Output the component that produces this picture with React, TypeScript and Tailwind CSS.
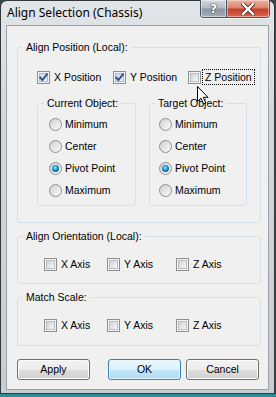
import React from "react";

const F = { fontFamily: '"Liberation Sans", Arial, sans-serif' };

function Check({ checked = false }: { checked?: boolean }) {
  return (
    <span className="relative flex h-[13px] w-[13px] shrink-0 border border-[#8e8f8f] bg-[#f4f4f4] p-[1px]">
      <span
        className={
          "flex-1 border " +
          (checked
            ? "border-[#a9b9cf] bg-[linear-gradient(135deg,#c9d5e6,#f2f6fb)]"
            : "border-[#b9bcc0] bg-[linear-gradient(135deg,#cfd2d6,#f7f7f7)]")
        }
      />
      {checked && (
        <svg className="absolute left-0 top-0" width="11" height="11" viewBox="0 0 11 11">
          <path d="M2.2 5.6 L4.4 8 L8.9 2.3" fill="none" stroke="#2e4f8f" strokeWidth="1.9" strokeLinecap="square" />
        </svg>
      )}
    </span>
  );
}

function Radio({ sel = false }: { sel?: boolean }) {
  return (
    <span className="flex h-[13px] w-[13px] shrink-0 items-center justify-center rounded-full border border-[#8e8f8f] bg-[linear-gradient(135deg,#cdd0d4,#fbfbfb)]">
      {sel && (
        <span className="h-[7px] w-[7px] rounded-full bg-[radial-gradient(circle_at_45%_40%,#b6ecff_0%,#2aa2e0_35%,#0d5a9a_70%,#0a3560_100%)]" />
      )}
    </span>
  );
}

function Group({
  label,
  className,
  children,
  labelLeft = "left-[5px]",
}: {
  label: string;
  className: string;
  children?: React.ReactNode;
  labelLeft?: string;
}) {
  return (
    <div className={"relative rounded-[3px] border border-[#d5dfe5] " + className}>
      <span className={"absolute top-[-8px] bg-[#f0f0f0] px-[3px] text-[10.5px] leading-[14px] text-black " + labelLeft}>
        {label}
      </span>
      {children}
    </div>
  );
}

function CheckItem({ label, checked, w, focus }: { label: string; checked?: boolean; w: string; focus?: boolean }) {
  return (
    <div className={"flex h-[16px] items-center " + w}>
      <Check checked={checked} />
      <span
        className={
          "ml-[1px] px-[2px] text-[10.5px] leading-[14px] text-black " +
          (focus ? "border border-dotted border-black" : "border border-transparent")
        }
      >
        {label}
      </span>
    </div>
  );
}

function RadioItem({ label, sel }: { label: string; sel?: boolean }) {
  return (
    <div className="flex h-[22px] items-center">
      <Radio sel={sel} />
      <span className="ml-[3px] text-[10.5px] leading-[14px] text-black">{label}</span>
    </div>
  );
}

function Btn({ label, def, className = "" }: { label: string; def?: boolean; className?: string }) {
  return (
    <div
      className={
        "flex h-[21px] w-[73px] items-center justify-center rounded-[3px] border text-[10.5px] text-black " +
        (def
          ? "border-[#3c7fb1] bg-[linear-gradient(#edf7fd_0%,#dcf1fc_50%,#c3e7fb_50%,#aedcf6_100%)] shadow-[inset_0_0_0_1px_#e6f5fd] "
          : "border-[#707070] bg-[linear-gradient(#f3f3f3_0%,#ececec_50%,#dedede_50%,#d0d0d0_100%)] shadow-[inset_0_0_0_1px_#fbfbfb] ") +
        className
      }
    >
      {label}
    </div>
  );
}

export default function App() {
  return (
    <div className="relative flex h-[397px] w-[276px] flex-col overflow-hidden bg-[#3d4549]" style={F}>
      <div className="flex h-[394px] w-[275px] flex-col rounded-t-[7px] border border-[#33383d] bg-[linear-gradient(180deg,#e2e5e8_0%,#d3d7db_30%,#c8cdd2_100%)] px-[5px] pb-[3px]">
        {/* title bar */}
        <div className="flex h-[24px] shrink-0 items-start">
          <span
            className="pl-[1px] pt-[4px] text-[12px] leading-[16px] text-black"
            style={{ fontFamily: '"Noto Sans", "Open Sans", sans-serif' }}
          >
            Align Selection (Chassis)
          </span>
          <div className="ml-auto mr-[-1px] mt-[-1px] flex h-[18px] rounded-b-[4px] border border-t-0 border-[#4b525a] shadow-[0_1px_0_#f4f6f8]">
            <div className="flex h-full w-[26px] items-center justify-center rounded-bl-[3px] border-r border-[#4b525a] bg-[linear-gradient(180deg,#d3d8de_0%,#b4bbc5_45%,#8d96a4_55%,#a4acb8_100%)] shadow-[inset_0_0_0_1px_rgba(255,255,255,0.45)]">
              <span
                className="text-[13px] font-bold leading-[14px] text-white"
                style={{ fontFamily: '"DejaVu Sans", sans-serif', textShadow: "0 0 1px #333, 0 0 1px #333, 0 0 1px #333" }}
              >
                ?
              </span>
            </div>
            <div className="flex h-full w-[42px] items-center justify-center rounded-br-[3px] bg-[linear-gradient(180deg,#ecb3a6_0%,#dc8470_45%,#c5402a_55%,#d6674f_100%)] shadow-[inset_0_0_0_1px_rgba(255,230,220,0.5)]">
              <svg width="14" height="12" viewBox="0 0 14 12">
                <path d="M2 1 L12 11 M12 1 L2 11" stroke="#5a2620" strokeWidth="4.2" strokeLinecap="square" />
                <path d="M2 1 L12 11 M12 1 L2 11" stroke="#ffffff" strokeWidth="2.4" strokeLinecap="square" />
              </svg>
            </div>
          </div>
        </div>
        {/* client */}
        <div className="flex h-[365px] flex-col border border-[#9aa1a9] bg-[#f0f0f0] pl-[10px] pr-[7px]">
          <Group label="Align Position (Local):" className="mt-[21px] h-[176px]">
            <div className="ml-[19px] mt-[21px] flex">
              <CheckItem label="X Position" checked w="w-[76px]" />
              <CheckItem label="Y Position" checked w="w-[75px]" />
              <CheckItem label="Z Position" w="w-[70px]" focus />
            </div>
            <div className="ml-[19px] mt-[18px] flex">
              <Group label="Current Object:" className="h-[103px] w-[99px]" labelLeft="left-[6px]">
                <div className="ml-[11px] mt-[9px] flex flex-col">
                  <RadioItem label="Minimum" />
                  <RadioItem label="Center" />
                  <RadioItem label="Pivot Point" sel />
                  <RadioItem label="Maximum" />
                </div>
              </Group>
              <Group label="Target Object:" className="ml-[13px] h-[103px] w-[98px]" labelLeft="left-[5px]">
                <div className="ml-[9px] mt-[9px] flex flex-col">
                  <RadioItem label="Minimum" />
                  <RadioItem label="Center" />
                  <RadioItem label="Pivot Point" sel />
                  <RadioItem label="Maximum" />
                </div>
              </Group>
            </div>
          </Group>
          <Group label="Align Orientation (Local):" className="mt-[13px] h-[48px]">
            <div className="ml-[26px] mt-[19px] flex">
              <CheckItem label="X Axis" w="w-[63px]" />
              <CheckItem label="Y Axis" w="w-[69px]" />
              <CheckItem label="Z Axis" w="w-[60px]" />
            </div>
          </Group>
          <Group label="Match Scale:" className="mt-[13px] h-[49px]">
            <div className="ml-[26px] mt-[19px] flex">
              <CheckItem label="X Axis" w="w-[63px]" />
              <CheckItem label="Y Axis" w="w-[69px]" />
              <CheckItem label="Z Axis" w="w-[60px]" />
            </div>
          </Group>
          <div className="mt-[13px] flex">
            <Btn label="Apply" />
            <Btn label="OK" def className="ml-[18px]" />
            <Btn label="Cancel" className="ml-[5px]" />
          </div>
        </div>
      </div>
      <div className="h-[3px] w-full bg-[#2f8d9a]" />
      {/* mouse cursor */}
      <svg className="absolute left-[196px] top-[85px]" width="14" height="21" viewBox="0 0 14 21">
        <path
          d="M1.5 1.5 L1.5 16.5 L5 13.2 L7.6 19 L9.8 18 L7.3 12.3 L12 12.3 Z"
          fill="#ffffff"
          stroke="#000000"
          strokeWidth="1"
          strokeLinejoin="miter"
        />
      </svg>
    </div>
  );
}
